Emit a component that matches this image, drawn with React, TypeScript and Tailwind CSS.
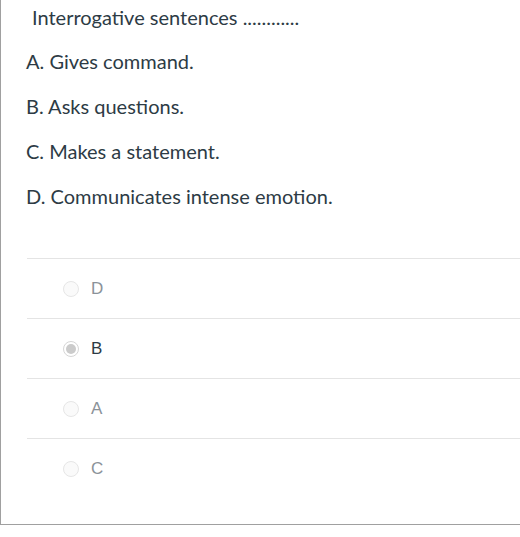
const options = [
  { label: 'D', checked: false },
  { label: 'B', checked: true },
  { label: 'A', checked: false },
  { label: 'C', checked: false },
];

const statements = [
  'A. Gives command.',
  'B. Asks questions.',
  'C. Makes a statement.',
  'D. Communicates intense emotion.',
];

export default function App() {
  return (
    <div className="w-[520px] bg-white">
      <div className="h-[525px] border-l border-b border-[#a0a0a0] font-['Lato',sans-serif] text-[#2d3b45]">
        {/* Question */}
        <div className="pl-[31px] pt-[5px] text-[20px] leading-[24px]">
          Interrogative sentences ............
        </div>
        <div className="mt-[20px] flex flex-col gap-[21px] pl-[25px] text-[20px] leading-[24px]">
          {statements.map((s) => (
            <div key={s}>{s}</div>
          ))}
        </div>

        {/* Answers */}
        <div className="ml-[26px] mt-[50px]">
          {options.map((o) => (
            <div key={o.label} className="flex h-[60px] items-center border-t border-[#e4e4e4] pl-[36px]">
              <span
                className={`flex h-[16px] w-[16px] items-center justify-center rounded-full border ${
                  o.checked ? 'border-[#d6d6d6] bg-white' : 'border-[#e6e6e6] bg-[#fafafa]'
                }`}
              >
                {o.checked && <span className="h-[10px] w-[10px] rounded-full bg-[#cbcbcb]" />}
              </span>
              <span
                className={`ml-[12px] font-['Liberation_Sans',Arial,sans-serif] text-[17px] ${
                  o.checked ? 'text-[#2d3b45]' : 'text-[#8b9299]'
                }`}
              >
                {o.label}
              </span>
            </div>
          ))}
        </div>
      </div>
    </div>
  );
}
